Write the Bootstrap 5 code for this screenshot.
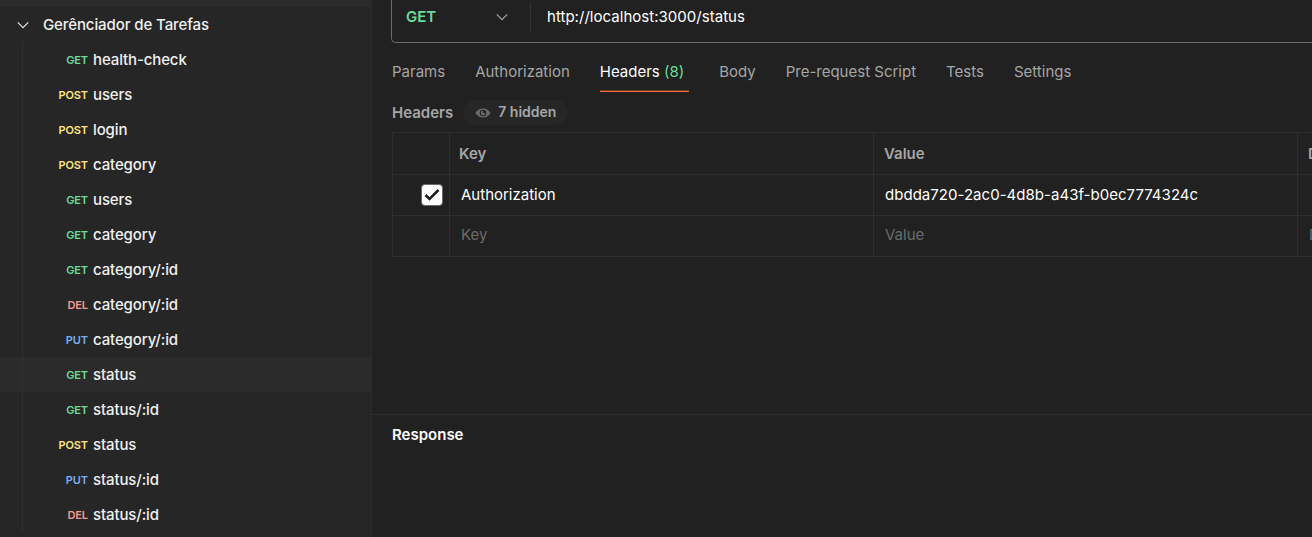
<!DOCTYPE html>
<html lang="pt-BR" data-bs-theme="dark">
<head>
<meta charset="utf-8">
<meta name="viewport" content="width=device-width, initial-scale=1">
<title>Gerênciador de Tarefas</title>
<link rel="stylesheet" href="https://cdn.jsdelivr.net/npm/bootstrap@5.3.0/dist/css/bootstrap.min.css">
<style>
  body { font: 15px/20px Inter, "Liberation Sans", sans-serif; background: #212121; color: #fff; }
  .sidebar { width: 372px; background: #262626; border-right: 1px solid #2b2b2b; color: #f0f0f0; }
  .side-top { height: 7px; background: #2b2b2b; }
  .tree-row { height: 35px; }
  .tree-root { padding-left: 17px; gap: 14px; font-weight: 450; letter-spacing: -.1px; }
  .tree-list { position: relative; }
  .tree-list::before { content: ""; position: absolute; left: 22px; top: 0; bottom: 0; width: 1px; background: #303030; }
  .req.selected { background: #2b2b2b; }
  .method { width: 88px; font-size: 11px; font-weight: 600; text-align: right; letter-spacing: -.1px; }
  .req-name { padding-left: 5px; font-weight: 450; letter-spacing: -.12px; }
  .m-get { color: #6bdd9a; } .m-post { color: #ffe47e; } .m-put { color: #74aef6; } .m-del { color: #f79a8e; }
  .work { padding-left: 19px; }
  .url-bar { height: 43px; border: 1px solid #6b6b6b; border-width: 0 0 1px 1px; border-bottom-left-radius: 5px; }
  .verb { width: 138px; height: 34px; padding: 0 22px 0 14px; color: #6bdd9a; font-weight: 600; }
  .url-split { width: 1px; height: 30px; margin-top: 2px; background: #333; }
  .url-text { height: 34px; padding-left: 16px; letter-spacing: .03px; }
  .req-tabs { padding: 19px 0 0 1px; gap: 30px; color: #a6a6a6; }
  .req-tabs > a { color: inherit; text-decoration: none; height: 30px; }
  .req-tabs > a.active { color: #fff; background: linear-gradient(#6e3b28 50%, #ff6c37 50%) bottom / 100% 2px no-repeat; padding-right: 5px; }
  .tab-count { color: #6bdd9a; }
  .hdr-line { margin: 8px 0 7px 1px; height: 25px; color: #a6a6a6; font-weight: 600; gap: 10px; }
  .hidden-pill { background: #262626; height: 25px; width: 105px; padding-left: 12px; gap: 7px; color: #a6a6a6; font-size: 14px; }
  .hidden-pill span { margin-top: -1px; }
  .kv { width: 1330px; margin-left: 1px; display: grid; grid-template-columns: 57px 424px 424px 425px; grid-template-rows: 42px 41px 41px; border-left: 1px solid #2e2e2e; border-top: 1px solid #2e2e2e; }
  .kv > div { border-right: 1px solid #2e2e2e; border-bottom: 1px solid #2e2e2e; padding-left: 11px; display: flex; align-items: center; }
  .kv .head { color: #a6a6a6; font-weight: 600; padding-left: 10px; }
  .kv .head-key { padding-left: 9px; }
  .kv .token { letter-spacing: .03px; }
  .kv .ghost { color: #6b6b6b; padding-bottom: 2px; }
  .tick { width: 22px; height: 22px; background: #fff; border: 1px solid #6b6b6b; border-radius: 4px; margin-left: 17px; }
  .response { margin-top: 157px; border-top: 1px solid #2e2e2e; padding: 10px 0 0 20px; font-weight: 600; }
</style>
</head>
<body>
<div class="d-flex vh-100 overflow-hidden">
  <aside class="sidebar flex-shrink-0">
    <div class="side-top"></div>
    <div class="tree-row tree-root d-flex align-items-center">
      <svg width="12" height="12" viewBox="0 0 12 12" fill="none" stroke="#e6e6e6" stroke-width="1.2"><path d="M.8 3.4 6 8.6l5.200-5.200"/></svg>
      <span>Gerênciador de Tarefas</span>
    </div>
    <div class="tree-list">
      <div class="tree-row req d-flex align-items-center"><span class="method m-get">GET</span><span class="req-name">health-check</span></div>
      <div class="tree-row req d-flex align-items-center"><span class="method m-post">POST</span><span class="req-name">users</span></div>
      <div class="tree-row req d-flex align-items-center"><span class="method m-post">POST</span><span class="req-name">login</span></div>
      <div class="tree-row req d-flex align-items-center"><span class="method m-post">POST</span><span class="req-name">category</span></div>
      <div class="tree-row req d-flex align-items-center"><span class="method m-get">GET</span><span class="req-name">users</span></div>
      <div class="tree-row req d-flex align-items-center"><span class="method m-get">GET</span><span class="req-name">category</span></div>
      <div class="tree-row req d-flex align-items-center"><span class="method m-get">GET</span><span class="req-name">category/:id</span></div>
      <div class="tree-row req d-flex align-items-center"><span class="method m-del">DEL</span><span class="req-name">category/:id</span></div>
      <div class="tree-row req d-flex align-items-center"><span class="method m-put">PUT</span><span class="req-name">category/:id</span></div>
      <div class="tree-row req selected d-flex align-items-center"><span class="method m-get">GET</span><span class="req-name">status</span></div>
      <div class="tree-row req d-flex align-items-center"><span class="method m-get">GET</span><span class="req-name">status/:id</span></div>
      <div class="tree-row req d-flex align-items-center"><span class="method m-post">POST</span><span class="req-name">status</span></div>
      <div class="tree-row req d-flex align-items-center"><span class="method m-put">PUT</span><span class="req-name">status/:id</span></div>
      <div class="tree-row req d-flex align-items-center"><span class="method m-del">DEL</span><span class="req-name">status/:id</span></div>
    </div>
  </aside>
  <main class="flex-grow-1 overflow-hidden">
    <div class="work">
      <div class="url-bar d-flex align-items-start">
        <div class="verb d-flex align-items-center justify-content-between">
          <span>GET</span>
          <svg width="12" height="12" viewBox="0 0 12 12" fill="none" stroke="#a6a6a6" stroke-width="1.2"><path d="M.8 3.400 6 8.600l5.200-5.200"/></svg>
        </div>
        <div class="url-split"></div>
        <div class="url-text d-flex align-items-center">http://localhost:3000/status</div>
      </div>
      <nav class="req-tabs d-flex">
        <a href="#">Params</a><a href="#">Authorization</a><a href="#" class="active">Headers <span class="tab-count">(8)</span></a><a href="#">Body</a><a href="#">Pre-request Script</a><a href="#">Tests</a><a href="#">Settings</a>
      </nav>
      <div class="hdr-line d-flex align-items-center">
        <span>Headers</span>
        <span class="hidden-pill rounded-pill d-flex align-items-center">
          <svg width="16" height="12" viewBox="0 0 16 12"><path fill="#6b6b6b" fill-rule="evenodd" d="M8 1.500C4.500 1.500 2 3.300.4 6 2 8.700 4.500 10.500 8 10.500s6-1.800 7.600-4.500C14 3.300 11.500 1.500 8 1.500Zm0 1.200a3.300 3.300 0 1 1 0 6.600 3.300 3.300 0 0 1 0-6.600Z"/><path d="M8 3.800A2.200 2.200 0 1 0 10.200 6H8Z" fill="#6b6b6b"/></svg>
          <span>7 hidden</span>
        </span>
      </div>
      <div class="kv">
        <div></div><div class="head head-key">Key</div><div class="head">Value</div><div class="head">Description</div>
        <div><span class="tick d-flex align-items-center justify-content-center"><svg width="16" height="14" viewBox="0 0 16 14" fill="none" stroke="#212121" stroke-width="2.600"><path d="m1.500 7 4 4 9-9"/></svg></span></div>
        <div>Authorization</div><div class="token">dbdda720-2ac0-4d8b-a43f-b0ec7774324c</div><div></div>
        <div></div><div class="ghost">Key</div><div class="ghost">Value</div><div class="ghost">Description</div>
      </div>
    </div>
    <div class="response">Response</div>
  </main>
</div>
<script src="https://cdn.jsdelivr.net/npm/bootstrap@5.3.0/dist/js/bootstrap.bundle.min.js"></script>
</body>
</html>
